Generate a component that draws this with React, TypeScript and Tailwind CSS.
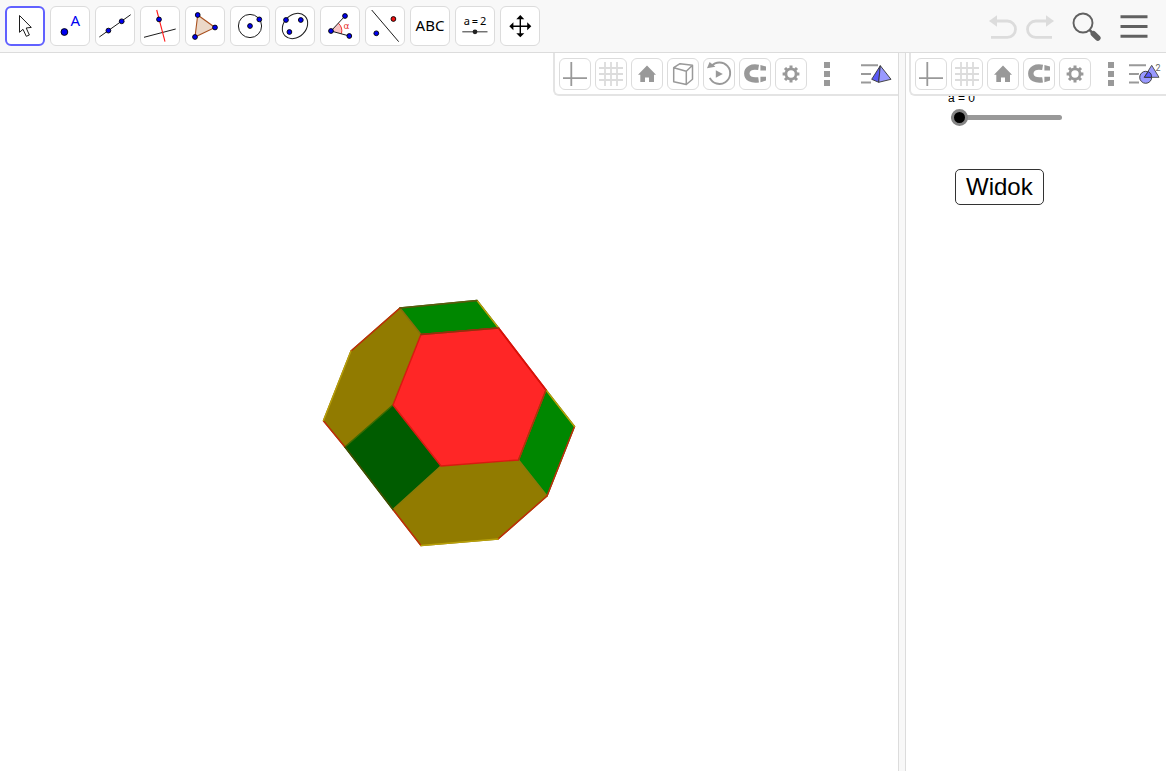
import { useState } from "react";
import type { ReactNode } from "react";

const INK = "#1c1c1c";
const BLUE = "#0000f0";

function Dot({ x, y, r = 2.4, fill = BLUE }: { x: number; y: number; r?: number; fill?: string }) {
  return <circle cx={x} cy={y} r={r} fill={fill} stroke="#000" strokeWidth="0.9" />;
}

const tools: { name: string; icon: ReactNode }[] = [
  {
    name: "Move",
    icon: (
      <path
        d="M14.5 9.5V26.3L18 23.3L21.3 30.3L24.4 29L21.2 22L26.3 21.4Z"
        fill="#fff"
        stroke={INK}
        strokeWidth="1"
      />
    ),
  },
  {
    name: "Point",
    icon: (
      <>
        <Dot x={14.4} y={26} r={3.4} />
        <text x="20.5" y="20" fill={BLUE} fontSize="15" fontFamily="Noto Sans, sans-serif">
          A
        </text>
      </>
    ),
  },
  {
    name: "Line",
    icon: (
      <>
        <path d="M4.3 31L35.7 8.7" stroke={INK} strokeWidth="1" />
        <Dot x={13.4} y={24.6} />
        <Dot x={26.7} y={15.3} />
      </>
    ),
  },
  {
    name: "Perpendicular Line",
    icon: (
      <>
        <path d="M4 31.3L35.7 23" stroke={INK} strokeWidth="1" />
        <path d="M16.7 4L25 35.7" stroke="#ff1a1a" strokeWidth="1.1" />
        <Dot x={19} y={13.4} />
      </>
    ),
  },
  {
    name: "Polygon",
    icon: (
      <>
        <path d="M12.7 9L30 21.5L10 31Z" fill="#ebd8c8" stroke="#a8501e" strokeWidth="1.1" />
        <Dot x={12.7} y={9} />
        <Dot x={30} y={21.5} />
        <Dot x={10} y={31} />
      </>
    ),
  },
  {
    name: "Circle with Center through Point",
    icon: (
      <>
        <circle cx="20" cy="20" r="11.6" fill="none" stroke={INK} strokeWidth="1" />
        <Dot x={20} y={20} />
        <Dot x={29.3} y={13.4} />
      </>
    ),
  },
  {
    name: "Ellipse",
    icon: (
      <>
        <ellipse
          cx="20"
          cy="20"
          rx="14"
          ry="11.2"
          transform="rotate(-45 20 20)"
          fill="none"
          stroke={INK}
          strokeWidth="1"
        />
        <Dot x={11} y={14} />
        <Dot x={25.8} y={14} />
        <Dot x={14.4} y={26} />
      </>
    ),
  },
  {
    name: "Angle",
    icon: (
      <>
        <path d="M11 25L18.4 17.2A10.8 10.8 0 0 1 21.4 27.8Z" fill="#f9c4c4" />
        <path d="M18.4 17.2A10.8 10.8 0 0 1 21.4 27.8" fill="none" stroke="#e33" strokeWidth="1" />
        <path d="M25 10L11 25L29.3 30" fill="none" stroke={INK} strokeWidth="1" />
        <Dot x={25} y={10} />
        <Dot x={11} y={25} />
        <Dot x={29.3} y={30} />
        <text x="23.5" y="23" fill="#e83030" fontSize="9" fontFamily="DejaVu Sans, sans-serif">
          α
        </text>
      </>
    ),
  },
  {
    name: "Reflect about Line",
    icon: (
      <>
        <path d="M6.7 4L33.7 35.7" stroke={INK} strokeWidth="1" />
        <Dot x={28.4} y={13} fill="#f01010" />
        <Dot x={11.3} y={27.3} />
      </>
    ),
  },
  {
    name: "Text",
    icon: (
      <text x="20" y="25" textAnchor="middle" fill="#000" fontSize="15" fontFamily="Noto Sans, sans-serif">
        ABC
      </text>
    ),
  },
  {
    name: "Slider",
    icon: (
      <>
        <text x="20" y="19" textAnchor="middle" fill="#000" fontSize="11" fontFamily="Noto Sans, sans-serif">
          a{"\u2009"}={"\u2009"}2
        </text>
        <path d="M7.3 25.8H32.5" stroke="#444" strokeWidth="1.1" />
        <circle cx="20" cy="25.8" r="2.4" fill="#222" />
      </>
    ),
  },
  {
    name: "Move Graphics View",
    icon: (
      <>
        <path d="M20.3 12V29M12 20.3H28.5" stroke="#000" strokeWidth="1.4" />
        <path
          d="M20.3 9L24.3 13.2H16.3ZM20.3 31.3L24.3 27.2H16.3ZM9.3 20.3L13.4 16.3V24.3ZM31.3 20.3L27.2 16.3V24.3Z"
          fill="#000"
        />
      </>
    ),
  },
];

const axes = <path d="M12.3 4V28M4 20.2H28" stroke="#999" strokeWidth="1.8" />;
const grid = (
  <path d="M10 4V28M16 4V28M22 4V28M4 10H28M4 16H28M4 22H28" stroke="#dcdcdc" strokeWidth="1.8" />
);
const home = <path d="M16 7.5L25 16.8H23V24H18V19.5H14V24H9.3V16.8H7Z" fill="#999" />;
const cube = (
  <path
    d="M6.7 9.7L13 5.7L25.5 7.3L19.3 13.3ZM6.7 9.7V23.7L19.3 26.5V13.3M19.3 26.5L25.5 21.3V7.3"
    fill="none"
    stroke="#999"
    strokeWidth="1.5"
    strokeLinejoin="round"
  />
);
const rotate = (
  <>
    <path d="M8.4 8.2A10.7 10.7 0 1 1 6.8 19.8" fill="none" stroke="#999" strokeWidth="1.9" />
    <path d="M4 10.2L6.6 4L12.4 8.8Z" fill="#999" />
    <path d="M12.8 12.2L19.8 16L12.8 19.8Z" fill="#999" />
  </>
);
const magnet = (
  <>
    <path d="M19.6 9.4C12.5 8.2 7.8 10.4 7.8 15.5S12.5 22.8 19.6 21.8" fill="none" stroke="#999" strokeWidth="5.4" />
    <path d="M21.4 7L27 8.6V12.6L21.4 12.4ZM21.4 18.8L27 18.8V22.6L21.4 24.2Z" fill="#999" />
  </>
);
const gear = (
  <>
    <circle cx="16" cy="16" r="5.1" fill="none" stroke="#999" strokeWidth="2.8" />
    <path
      d="M16 7.6V11M16 21V24.4M7.6 16H11M21 16H24.4M10 10L12.4 12.4M19.6 19.6L22 22M22 10L19.6 12.4M12.4 19.6L10 22"
      stroke="#999"
      strokeWidth="3"
    />
  </>
);
const more = <path d="M13 4H19V10H13ZM13 13H19V19H13ZM13 22H19V28H13Z" fill="#999" />;

function ViewButton({ name, children, flat = false }: { name: string; children: ReactNode; flat?: boolean }) {
  return (
    <button
      type="button"
      aria-label={name}
      className={
        flat
          ? "flex size-8 items-center justify-center"
          : "mr-1 flex size-8 items-center justify-center rounded-md border border-[#dcdcdc] bg-white"
      }
    >
      <svg viewBox="0 0 32 32" className="size-8 shrink-0" aria-hidden="true">
        {children}
      </svg>
    </button>
  );
}

function StyleButton({ name, children }: { name: string; children: ReactNode }) {
  return (
    <button type="button" aria-label={name} className="flex h-8 items-center">
      <svg viewBox="0 0 34 32" className="h-8 w-[34px]" aria-hidden="true">
        <path d="M2 7.3H19M2 16H12M2 24.5H12" stroke="#999" strokeWidth="2" />
        {children}
      </svg>
    </button>
  );
}

function Solid() {
  return (
    <svg viewBox="309 272 280 280" className="size-[280px] shrink-0" role="img" aria-label="Truncated octahedron">
      <g strokeLinejoin="round" strokeWidth="1.4">
        <path d="M400 308L477 300.5L498.500 328L421 334.500Z" fill="#008700" stroke="#30690a" />
        <path d="M400 308L421 334.500L393 405L345 447L323.500 420.500L351 351Z" fill="#917b00" stroke="#86700a" />
        <path d="M393 405L441 466L393 509.500L345 447Z" fill="#005c00" stroke="#3a6c00" />
        <path d="M546 390L574.500 426.500L547 496L518.500 460Z" fill="#008700" stroke="#3c7a0a" />
        <path d="M441 466L518.500 460L547 496L498 539L421 545.500L393 509.500Z" fill="#917b00" stroke="#8a7a08" />
        <path d="M421 334.500L498.500 328L546 390L518.500 460L441 466L393 405Z" fill="#ff2626" stroke="#d81a10" />
      </g>
      <g fill="none" strokeWidth="1.4" strokeLinecap="round">
        <path d="M351 351L400 308M323.500 421L345 447M393 509.500L421 545.500M547 496L498 539M574.500 426.500L547 496" stroke="#c02a0a" />
        <path d="M498.500 328L546 390" stroke="#d81008" strokeWidth="1.8" />
        <path d="M351 351L323.500 420.500M421 545.500L498 539M477 300.500L498.500 328M546 390L574.500 426.500" stroke="#b89f08" />
        <path d="M345 447L393 509.500" stroke="#3c4a00" />
        <path d="M400 308L477 300.500" stroke="#5c5a0c" />
        <path d="M421 334.500L498.500 328" stroke="#8c340c" />
        <path d="M546 390L518.500 460" stroke="#a83a0a" />
      </g>
    </svg>
  );
}

export default function App() {
  const [selected, setSelected] = useState("Move");
  const [a, setA] = useState(0);

  return (
    <div className="flex h-screen flex-col bg-white pr-[2px] pb-[2px] font-['Liberation_Sans',Arial,sans-serif] text-black">
      <header className="flex h-[53px] shrink-0 items-center border-b border-[#dcdcdc] bg-[#f8f8f8]">
        <div role="toolbar" aria-label="Tools" className="flex gap-[5px] pl-[5px]">
          {tools.map((tool) => (
            <button
              key={tool.name}
              type="button"
              aria-label={tool.name}
              aria-pressed={selected === tool.name}
              onClick={() => setSelected(tool.name)}
              className={
                selected === tool.name
                  ? "flex size-10 items-center justify-center rounded-md border-2 border-[#6161ff] bg-white"
                  : "flex size-10 items-center justify-center rounded-md border border-[#dcdcdc] bg-white"
              }
            >
              <svg viewBox="0 0 40 40" className="size-10 shrink-0" aria-hidden="true">
                {tool.icon}
              </svg>
            </button>
          ))}
        </div>
        <div className="ml-auto flex items-center pr-[14px]">
          <button type="button" aria-label="Undo" className="size-9">
            <svg viewBox="0 0 36 36" className="size-9" aria-hidden="true">
              <path d="M10 13H21.300a8.200 8.200 0 0 1 0 16.400H5" fill="none" stroke="#dcdcdc" strokeWidth="2.800" />
              <path d="M3 13L11 7.200V18.800Z" fill="#dcdcdc" />
            </svg>
          </button>
          <button type="button" aria-label="Redo" className="mr-[11px] size-9">
            <svg viewBox="0 0 36 36" className="size-9" aria-hidden="true">
              <path d="M25 13H13.700a8.200 8.200 0 0 0 0 16.400H30" fill="none" stroke="#dcdcdc" strokeWidth="2.800" />
              <path d="M32 13L24 7.200V18.800Z" fill="#dcdcdc" />
            </svg>
          </button>
          <button type="button" aria-label="Search" className="mr-[11px] size-9">
            <svg viewBox="0 0 36 36" className="size-9" aria-hidden="true">
              <circle cx="14" cy="15" r="9.500" fill="none" stroke="#616161" strokeWidth="1.900" />
              <path d="M20.500 21.800L25 26.300" stroke="#616161" strokeWidth="2.600" />
              <path d="M24.400 25.700L28.800 30.100" stroke="#616161" strokeWidth="5.600" strokeLinecap="round" />
            </svg>
          </button>
          <button type="button" aria-label="Menu" className="size-9">
            <svg viewBox="0 0 36 36" className="size-9" aria-hidden="true">
              <path d="M4.500 8.800H31.500M4.500 18.500H31.500M4.500 28.200H31.500" stroke="#616161" strokeWidth="3" />
            </svg>
          </button>
        </div>
      </header>

      <main className="flex min-h-0 flex-1">
        <section aria-label="3D Graphics" className="relative flex min-w-0 flex-1 items-center justify-center overflow-hidden">
          <Solid />
          <div className="absolute top-0 right-0 flex rounded-bl-md border-b-2 border-l-2 border-[#e4e4e4] bg-white pt-[5px] pr-[5px] pb-1 pl-1">
            <ViewButton name="Axes">{axes}</ViewButton>
            <ViewButton name="Grid">{grid}</ViewButton>
            <ViewButton name="Standard View">{home}</ViewButton>
            <ViewButton name="View Direction">{cube}</ViewButton>
            <ViewButton name="Rotate View">{rotate}</ViewButton>
            <ViewButton name="Point Capturing">{magnet}</ViewButton>
            <ViewButton name="Settings">{gear}</ViewButton>
            <ViewButton name="More" flat>
              {more}
            </ViewButton>
            <div className="ml-4">
              <StyleButton name="3D Style Bar">
                <path d="M21.300 7.300L11.700 21.600L19.700 25.300L33 21.600Z" fill="#fff" stroke="#fff" strokeWidth="2" />
                <path d="M21.300 7.700L12.700 21.300L19.700 24.300Z" fill="#5a5af5" stroke="#333" strokeWidth="0.900" />
                <path d="M21.300 7.700L19.700 24.300L32 21.300Z" fill="#9999ff" stroke="#333" strokeWidth="0.900" />
              </StyleButton>
            </div>
          </div>
        </section>

        <div role="separator" aria-orientation="vertical" className="w-2 shrink-0 border-x border-[#dcdcdc] bg-[#f8f8f8]" />

        <section aria-label="Graphics 2" className="relative w-[260px] shrink-0">
          <div className="flex flex-col items-start pt-[38px] pl-[42px]">
            <label htmlFor="slider-a" className="text-[12px] leading-[14px]">
              a = {a}
            </label>
            <input
              id="slider-a"
              type="range"
              min={0}
              max={1}
              step={0.1}
              value={a}
              onChange={(e) => setA(Number(e.target.value))}
              className="mt-1 ml-[3px] h-[17px] w-[111px] appearance-none bg-transparent [&::-webkit-slider-runnable-track]:h-[5px] [&::-webkit-slider-runnable-track]:rounded-full [&::-webkit-slider-runnable-track]:bg-[#999] [&::-webkit-slider-thumb]:-mt-[6px] [&::-webkit-slider-thumb]:size-[17px] [&::-webkit-slider-thumb]:appearance-none [&::-webkit-slider-thumb]:rounded-full [&::-webkit-slider-thumb]:border-3 [&::-webkit-slider-thumb]:border-[#858585] [&::-webkit-slider-thumb]:bg-black"
            />
            <button
              type="button"
              className="mt-[43px] ml-[7px] h-9 rounded-[5px] border border-[#333] bg-white px-[10px] text-2xl leading-8"
            >
              Widok
            </button>
          </div>
          <div className="absolute top-0 right-0 flex rounded-bl-md border-b-2 border-l-2 border-[#e4e4e4] bg-white pt-[5px] pr-[5px] pb-1 pl-1">
            <ViewButton name="Axes">{axes}</ViewButton>
            <ViewButton name="Grid">{grid}</ViewButton>
            <ViewButton name="Standard View">{home}</ViewButton>
            <ViewButton name="Point Capturing">{magnet}</ViewButton>
            <ViewButton name="Settings">{gear}</ViewButton>
            <ViewButton name="More" flat>
              {more}
            </ViewButton>
            <StyleButton name="Style Bar">
              <circle cx="18.700" cy="19.300" r="7.600" fill="#fff" />
              <path d="M24.700 5L16 20.500H33.500Z" fill="#fff" />
              <circle cx="18.700" cy="19.300" r="6" fill="#9999ff" stroke="#444" strokeWidth="1" />
              <path d="M24.700 7.300L17.300 19.300H32Z" fill="#9999ff" stroke="#555" strokeWidth="1" />
              <path d="M17.300 19.300L21.300 13.500A6 6 0 0 1 24.700 19.300Z" fill="#5a5aff" stroke="#333" strokeWidth="0.900" />
              <text x="28.500" y="12.500" fill="#666" fontSize="9" fontFamily="Roboto, sans-serif">
                2
              </text>
            </StyleButton>
          </div>
        </section>
      </main>
    </div>
  );
}
